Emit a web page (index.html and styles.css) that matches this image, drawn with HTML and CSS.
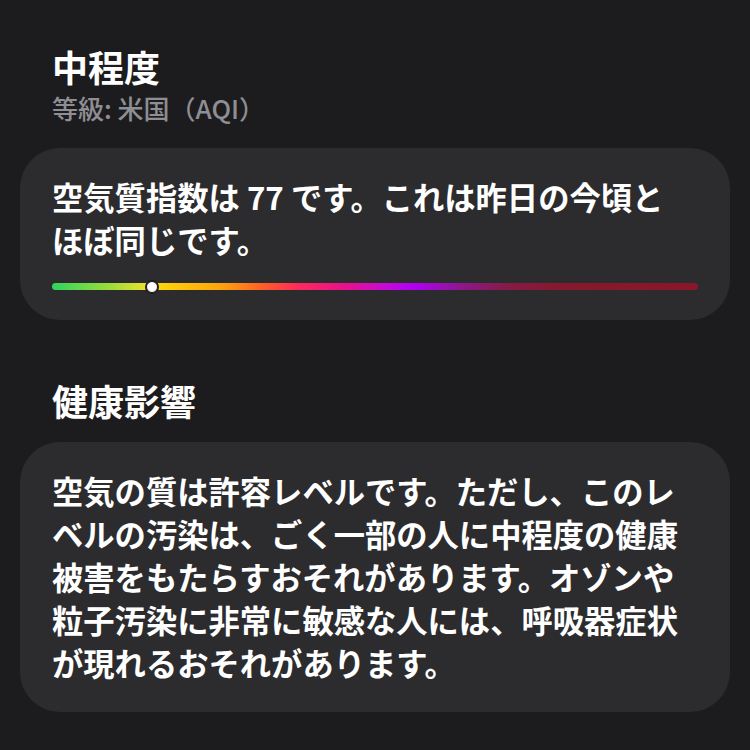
FILE: index.html
```html
<!DOCTYPE html>
<html lang="ja">
<head>
<meta charset="utf-8">
<link rel="stylesheet" href="styles.css">
</head>
<body>
<main class="page">
  <header class="level">
    <h1 class="title">中程度</h1>
    <div class="subtitle">等級: 米国（AQI）</div>
  </header>

  <section class="card card-index">
    <p class="card-text">空気質指数は 77 です。これは昨日の今頃と<br>ほぼ同じです。</p>
    <div class="scale">
      <div class="scale-bar"></div>
      <div class="scale-marker" style="left: 15.6%"></div>
    </div>
  </section>

  <h2 class="heading">健康影響</h2>

  <section class="card card-health">
    <p class="card-text">空気の質は許容レベルです。ただし、このレ<br>ベルの汚染は、ごく一部の人に中程度の健康<br>被害をもたらすおそれがあります。オゾンや<br>粒子汚染に非常に敏感な人には、呼吸器症状<br>が現れるおそれがあります。</p>
  </section>
</main>
</body>
</html>
```

FILE: styles.css
```css
html, body {
  margin: 0;
  padding: 0;
  background: #1c1c1e;
}

body {
  width: 750px;
  height: 750px;
  overflow: hidden;
  font-family: "Noto Sans CJK JP", "Noto Sans", sans-serif;
  color: #ffffff;
}

.page {
  padding: 44px 20px 0 20px;
  display: flex;
  flex-direction: column;
}

.level {
  padding-left: 32px;
  display: flex;
  flex-direction: column;
  gap: 4px;
}

.title {
  margin: 0;
  font-size: 36px;
  line-height: 44px;
  font-weight: 700;
}

.subtitle {
  font-size: 26px;
  line-height: 32px;
  font-weight: 500;
  color: #8e8e93;
}

.card {
  background: #2c2c2e;
  border-radius: 40px;
  padding: 27px 32px 30px 32px;
}

.card-index {
  margin-top: 24px;
}

.card-health {
  margin-top: 20px;
  padding-bottom: 28px;
}

.card-text {
  margin: 0;
  font-size: 31.3px;
  line-height: 43px;
  font-weight: 600;
  white-space: nowrap;
}

.scale {
  position: relative;
  margin-top: 22px;
  height: 7px;
}

.scale-bar {
  height: 7px;
  border-radius: 4px;
  background: linear-gradient(to right,
    #2fd35f 0%,
    #8fdc3e 8%,
    #e6e22c 14.5%,
    #ffd30a 17%,
    #ffa40c 26%,
    #ff5a2a 33%,
    #ff2a5a 38%,
    #e8128a 45%,
    #c40ad8 52%,
    #b000f4 56%,
    #8e1690 63%,
    #861a4a 70%,
    #86192e 78%,
    #8a1729 100%);
}

.scale-marker {
  position: absolute;
  top: -2.5px;
  width: 10px;
  height: 10px;
  margin-left: -6.5px;
  border-radius: 50%;
  background: #ffffff;
  border: 1.5px solid #1c1c1e;
  box-shadow: 0 0 0 1px #1c1c1e;
}

.heading {
  margin: 58px 0 0 0;
  padding-left: 32px;
  font-size: 36px;
  line-height: 44px;
  font-weight: 700;
}
```
